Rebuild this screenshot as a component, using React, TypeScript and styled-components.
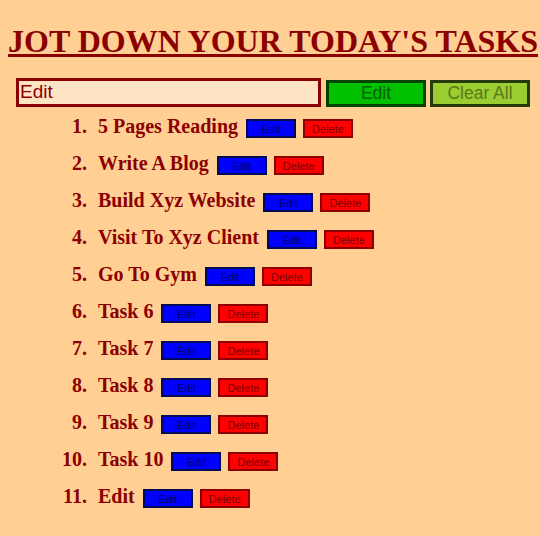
import React, { useState } from "react";
import styled, { createGlobalStyle } from "styled-components";

const GlobalStyle = createGlobalStyle`
  html, body {
    background: #ffcf94;
  }
  body {
    margin: 0 0 8px 8px;
    font-family: "Liberation Serif", "Times New Roman", serif;
  }
`;

const Title = styled.h1`
  margin: 23px 0 17.8px 0;
  font-family: "Liberation Serif", "Times New Roman", serif;
  font-size: 32px;
  font-weight: bold;
  color: #8b0000;
  text-decoration: underline;
  text-decoration-thickness: 3px;
  white-space: nowrap;
`;

const Toolbar = styled.div`
  display: flex;
  align-items: flex-end;
  padding-left: 8px;
  gap: 5px;
`;

const TaskInput = styled.input`
  box-sizing: border-box;
  width: 305px;
  height: 29px;
  padding: 0 1px;
  border: 3px solid #8b0000;
  background: #ffe4c4;
  color: #8b0000;
  font-family: "Liberation Sans", Arial, sans-serif;
  font-size: 19px;
  outline: none;
`;

const MainButton = styled.button<{ $variant: "edit" | "clear" }>`
  box-sizing: border-box;
  width: 100px;
  height: 27px;
  padding: 0;
  margin-left: ${(p) => (p.$variant === "clear" ? "-1px" : "0")};
  font-family: "Liberation Sans", Arial, sans-serif;
  font-size: 17.5px;
  border: 3px solid ${(p) => (p.$variant === "edit" ? "#004400" : "#263a0c")};
  background: ${(p) => (p.$variant === "edit" ? "#00c000" : "#9acd32")};
  color: ${(p) => (p.$variant === "edit" ? "#006000" : "#5a7a1a")};
  cursor: pointer;
`;

const List = styled.ol`
  list-style: none;
  margin: 8px 0 0 0;
  padding: 0;
`;

const Item = styled.li`
  display: flex;
  align-items: baseline;
  height: 37px;
  font-family: "Liberation Serif", "Times New Roman", serif;
  font-size: 20px;
  font-weight: bold;
  color: #8b0000;
`;

const Num = styled.span`
  width: 79px;
  text-align: right;
  margin-right: 11px;
  flex: none;
`;

const TaskText = styled.span`
  margin-right: 8px;
  white-space: nowrap;
`;

const SmallButton = styled.button<{ $kind: "edit" | "delete" }>`
  box-sizing: border-box;
  width: 50px;
  height: 19px;
  padding: 0;
  margin-right: 7px;
  font-family: "Liberation Sans", Arial, sans-serif;
  font-size: 11px;
  font-weight: normal;
  border: 2px solid ${(p) => (p.$kind === "edit" ? "#000a55" : "#8b0000")};
  background: ${(p) => (p.$kind === "edit" ? "#0000ff" : "#ff0000")};
  color: ${(p) => (p.$kind === "edit" ? "#000066" : "#7a0000")};
  cursor: pointer;
`;

const initialTasks = [
  "5 Pages Reading",
  "Write A Blog",
  "Build Xyz Website",
  "Visit To Xyz Client",
  "Go To Gym",
  "Task 6",
  "Task 7",
  "Task 8",
  "Task 9",
  "Task 10",
  "Edit",
];

export default function App() {
  const [tasks, setTasks] = useState(initialTasks);
  const [value, setValue] = useState("Edit");

  return (
    <>
      <GlobalStyle />
      <Title>JOT DOWN YOUR TODAY'S TASKS</Title>
      <Toolbar>
        <TaskInput value={value} onChange={(e) => setValue(e.target.value)} />
        <MainButton $variant="edit">Edit</MainButton>
        <MainButton $variant="clear" onClick={() => setTasks([])}>
          Clear All
        </MainButton>
      </Toolbar>
      <List>
        {tasks.map((t, i) => (
          <Item key={i}>
            <Num>{i + 1}.</Num>
            <TaskText>{t}</TaskText>
            <SmallButton $kind="edit">Edit</SmallButton>
            <SmallButton
              $kind="delete"
              onClick={() => setTasks(tasks.filter((_, j) => j !== i))}
            >
              Delete
            </SmallButton>
          </Item>
        ))}
      </List>
    </>
  );
}
